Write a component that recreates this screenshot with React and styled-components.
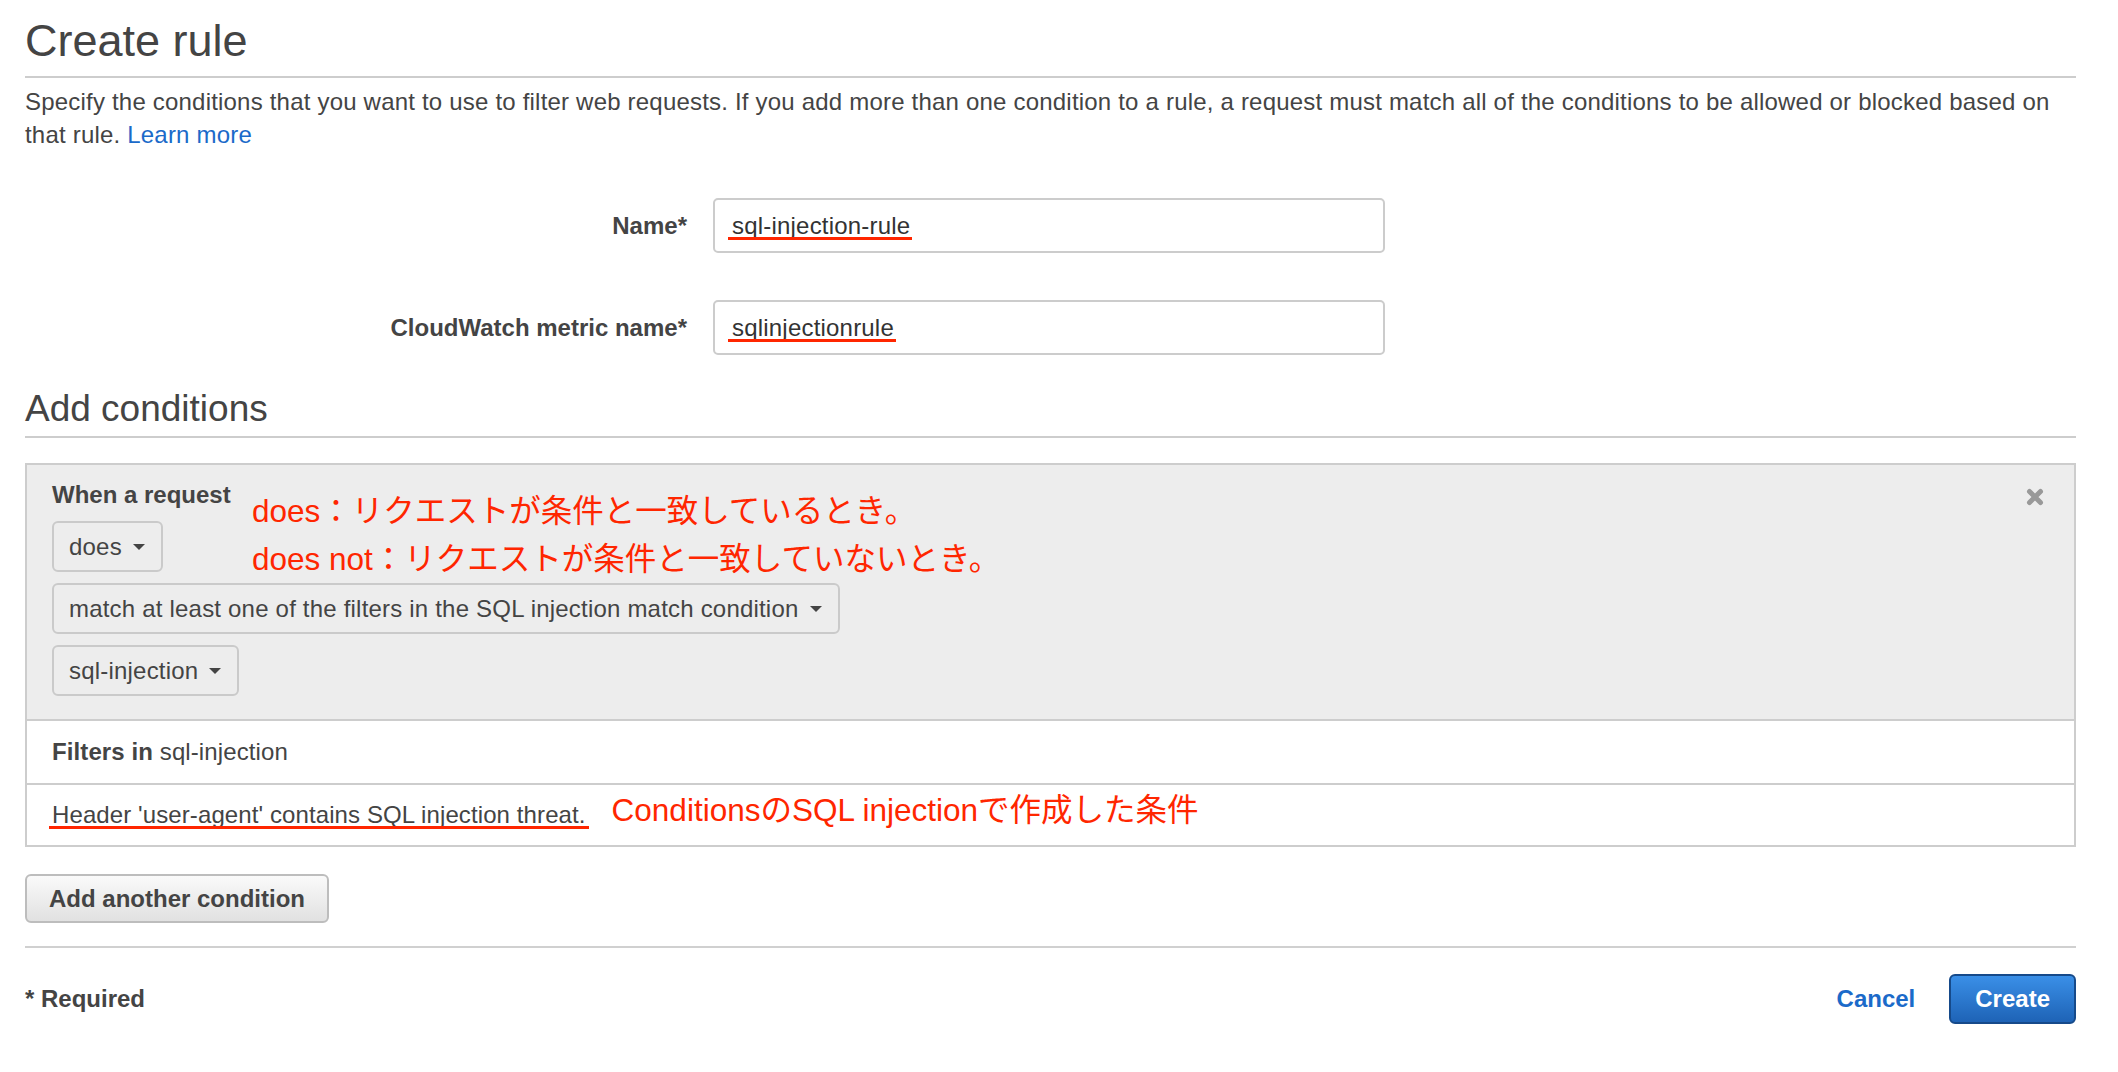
import React from "react";
import styled, { createGlobalStyle } from "styled-components";

const GlobalStyle = createGlobalStyle`
  html, body {
    margin: 0;
    padding: 0;
    background: #fff;
  }
  body {
    font-family: "Liberation Sans", Arial, "Noto Sans CJK JP", sans-serif;
    font-size: 24px;
    color: #444;
  }
  * {
    box-sizing: border-box;
  }
`;

const Page = styled.div`
  width: 2118px;
  padding: 15px 42px 0 25px;
`;

const Title = styled.h1`
  margin: 0;
  font-size: 45px;
  font-weight: 400;
  line-height: 52px;
  padding-bottom: 9px;
  border-bottom: 2px solid #cdcdcd;
  color: #444;
`;

const Intro = styled.p`
  margin: 7px 0 0;
  line-height: 33px;
  letter-spacing: 0.2px;
`;

const Link = styled.a`
  color: #1b6ac9;
  text-decoration: none;
`;

const Form = styled.div`
  margin-top: 47px;
  display: flex;
  flex-direction: column;
  gap: 47px;
`;

const FieldRow = styled.div`
  display: flex;
  align-items: center;
  gap: 26px;
`;

const FieldLabel = styled.label`
  width: 662px;
  text-align: right;
  font-weight: 700;
`;

const TextBox = styled.div`
  width: 672px;
  height: 55px;
  display: flex;
  align-items: center;
  padding: 0 17px;
  border: 2px solid #cccccc;
  border-radius: 5px;
  color: #333;
  letter-spacing: 0.2px;
`;

/* red hand-drawn underline from the screenshot annotation */
const Marked = styled.span`
  position: relative;

  &::after {
    content: "";
    position: absolute;
    left: ${(p) => p.$left || -4}px;
    right: ${(p) => p.$right || -2}px;
    bottom: 0;
    height: 3px;
    background: #ff2600;
  }
`;

const SectionTitle = styled.h2`
  margin: 33px 0 0;
  font-size: 37px;
  font-weight: 400;
  line-height: 42px;
  padding-bottom: 6px;
  border-bottom: 2px solid #cdcdcd;
  color: #444;
`;

const Panel = styled.div`
  margin-top: 25px;
  border: 2px solid #cdcdcd;
  background: #fff;
`;

const PanelHead = styled.div`
  position: relative;
  display: flex;
  justify-content: space-between;
  align-items: flex-start;
  padding: 16px 25px 23px;
  background: #ededed;
  border-bottom: 2px solid #cdcdcd;
`;

const Controls = styled.div`
  display: flex;
  flex-direction: column;
  align-items: flex-start;
  gap: 11px;
`;

const HeadLabel = styled.div`
  font-weight: 700;
  line-height: 28px;
  margin-bottom: 1px;
`;

const Select = styled.div`
  display: inline-flex;
  align-items: center;
  gap: 11px;
  height: 51px;
  padding: 0 16px 0 15px;
  border: 2px solid #cacaca;
  border-radius: 6px;
  background: #ededed;
  color: #444;
  letter-spacing: 0.2px;
`;

const Caret = styled.span`
  width: 0;
  height: 0;
  border-left: 6px solid transparent;
  border-right: 6px solid transparent;
  border-top: 6px solid #444;
`;

const CloseButton = styled.svg`
  flex-shrink: 0;
  margin-top: 7px;
  margin-right: 5px;
`;

const Annotation = styled.div`
  position: absolute;
  left: 225px;
  top: 22px;
  color: #ff2600;
  font-size: 31.5px;
  line-height: 48px;
  white-space: nowrap;
`;

const FilterRow = styled.div`
  display: flex;
  align-items: center;
  height: ${(p) => p.$height}px;
  padding: 0 25px;
  border-bottom: ${(p) => (p.$last ? "none" : "2px solid #cdcdcd")};
  letter-spacing: 0.1px;
`;

const Note = styled.span`
  position: relative;
  top: -5px;
  margin-left: 26px;
  color: #ff2600;
  font-size: 31.5px;
  line-height: 36px;
  letter-spacing: 0;
  white-space: nowrap;
`;

const Button = styled.button`
  margin-top: 27px;
  height: 49px;
  padding: 0 22px;
  border: 2px solid #bdbdbd;
  border-radius: 6px;
  background: linear-gradient(#fafafa, #e1e1e1);
  font-family: inherit;
  font-size: 24px;
  font-weight: 700;
  color: #444;
`;

const Divider = styled.hr`
  margin: 23px 0 0;
  border: 0;
  border-top: 2px solid #d0d0d0;
`;

const Footer = styled.div`
  margin-top: 26px;
  height: 50px;
  display: flex;
  align-items: center;
  justify-content: space-between;
`;

const Required = styled.span`
  font-weight: 700;
`;

const Actions = styled.div`
  display: flex;
  align-items: center;
  gap: 34px;
`;

const Cancel = styled.a`
  font-weight: 700;
  color: #1b6ac9;
  text-decoration: none;
`;

const Primary = styled.button`
  height: 50px;
  padding: 0 24px;
  border: 2px solid #164a8a;
  border-radius: 6px;
  background: linear-gradient(#3a8fe7, #1e63b6);
  font-family: inherit;
  font-size: 24px;
  font-weight: 700;
  color: #fff;
`;

const App = () => {
  return (
    <Page>
      <GlobalStyle />
      <Title>Create rule</Title>
      <Intro>
        Specify the conditions that you want to use to filter web requests. If you add more than one
        condition to a rule, a request must match all of the conditions to be allowed or blocked based
        on that rule. <Link href="#">Learn more</Link>
      </Intro>

      <Form>
        <FieldRow>
          <FieldLabel>Name*</FieldLabel>
          <TextBox>
            <Marked>sql-injection-rule</Marked>
          </TextBox>
        </FieldRow>
        <FieldRow>
          <FieldLabel>CloudWatch metric name*</FieldLabel>
          <TextBox>
            <Marked>sqlinjectionrule</Marked>
          </TextBox>
        </FieldRow>
      </Form>

      <SectionTitle>Add conditions</SectionTitle>

      <Panel>
        <PanelHead>
          <Controls>
            <HeadLabel>When a request</HeadLabel>
            <Select>
              does <Caret />
            </Select>
            <Select>
              match at least one of the filters in the SQL injection match condition <Caret />
            </Select>
            <Select>
              sql-injection <Caret />
            </Select>
          </Controls>
          <CloseButton width="18" height="18" viewBox="0 0 18 18">
            <path d="M3.5 3.5 L14.5 14.5 M14.5 3.5 L3.5 14.5" stroke="#999" strokeWidth="5" strokeLinecap="round" />
          </CloseButton>
          <Annotation>
            <div>does：リクエストが条件と一致しているとき。</div>
            <div>does not：リクエストが条件と一致していないとき。</div>
          </Annotation>
        </PanelHead>
        <FilterRow $height={64}>
          <strong>Filters in</strong>&nbsp;sql-injection
        </FilterRow>
        <FilterRow $height={60} $last>
          <Marked $left={-3} $right={-3}>Header 'user-agent' contains SQL injection threat.</Marked>
          <Note>ConditionsのSQL injectionで作成した条件</Note>
        </FilterRow>
      </Panel>

      <Button>Add another condition</Button>

      <Divider />

      <Footer>
        <Required>* Required</Required>
        <Actions>
          <Cancel href="#">Cancel</Cancel>
          <Primary>Create</Primary>
        </Actions>
      </Footer>
    </Page>
  );
};

export default App;
